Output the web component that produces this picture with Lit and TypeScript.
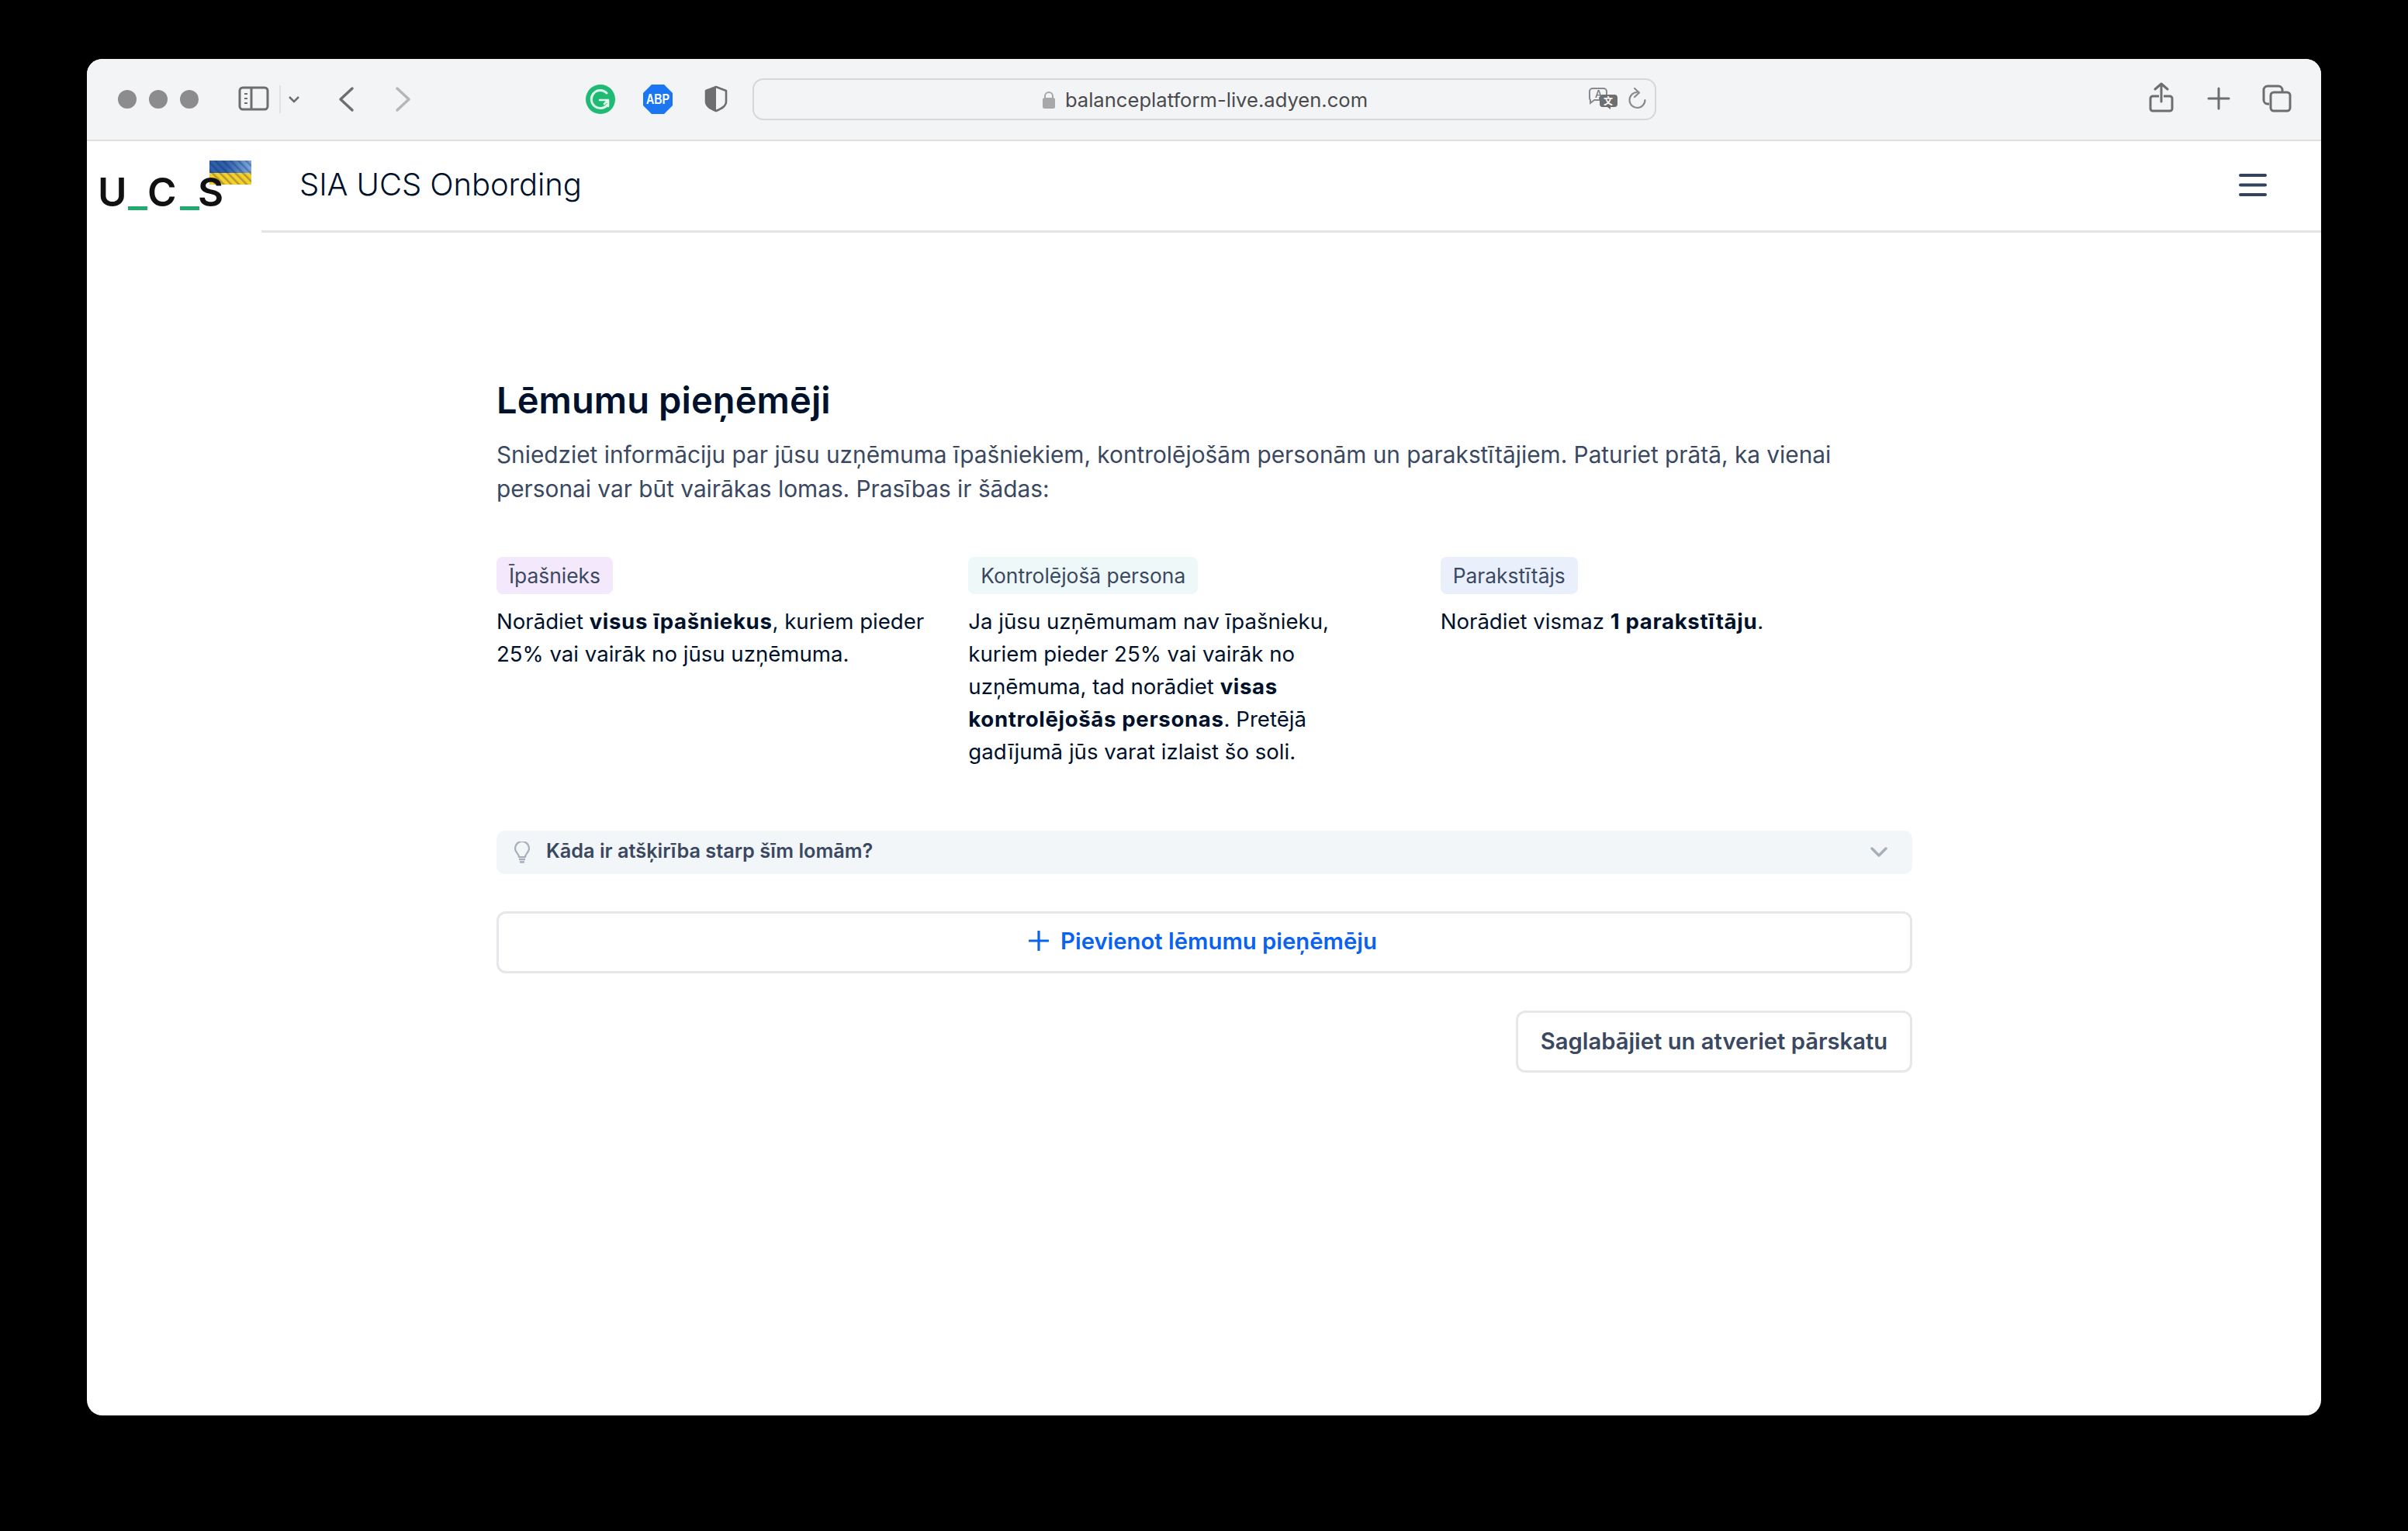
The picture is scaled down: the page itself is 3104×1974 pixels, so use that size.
import { LitElement, html, css, svg } from "lit";
import { customElement } from "lit/decorators.js";

@customElement("app-root")
export class AppRoot extends LitElement {
  static styles = css`
    :host { display: block; box-sizing: border-box; background: #000; padding: 76px 112px 149px; font-family: Inter, "Noto Sans", sans-serif; color: #00112c; height: 1974px; overflow: hidden; }
    .win { height: 100%; background: #fff; border-radius: 20px; overflow: hidden; display: flex; flex-direction: column; }
    .bar { height: 104px; flex: none; background: #f3f4f6; border-bottom: 2px solid #dfe0e2; position: relative; }
    .chrome { position: absolute; left: 0; top: 0; }
    .url { position: absolute; left: 858px; top: 25px; width: 1165px; height: 54px; box-sizing: border-box; border: 2px solid #d6d7da; border-radius: 14px; display: flex; align-items: center; justify-content: center; gap: 13px; font-size: 25.6px; color: #4a4a4d; padding-left: 2px; }
    .head { height: 118px; flex: none; display: flex; }
    .logo { width: 225px; flex: none; position: relative; }
    .logo svg { position: absolute; left: 0; top: 0; }
    .headmain { flex: 1; border-bottom: 3px solid #e3e4e6; display: flex; align-items: center; justify-content: space-between; padding: 0 70px 4px 49px; }
    .title { font-size: 40px; font-weight: 300; letter-spacing: -0.1px; color: #00112c; }
    .mark { font-size: 51px; font-weight: 600; color: #111; position: absolute; top: 35px; }
    .mu { left: 14px; } .mc { left: 78px; } .ms { left: 143px; }
    .content { padding: 186px 527px 0 528px; display: flex; flex-direction: column; }
    h1 { margin: 0; font-size: 47px; line-height: 60px; font-weight: 600; letter-spacing: 0.1px; color: #00112c; }
    .lead { margin: 18px 0 0; font-size: 29.8px; line-height: 44px; color: #3a4861; }
    .cols { display: grid; grid-template-columns: repeat(3, 1fr); margin-top: 66px; }
    .col { padding-right: 54px; }
    .pill { display: inline-block; height: 48px; line-height: 48px; padding: 0 16px; border-radius: 8px; font-size: 26.4px; color: #3a4861; }
    .p1 { background: #f3e8fc; } .p2 { background: #eef8f9; } .p3 { background: #e9f0fc; }
    .col p { margin: 14px 0 0; font-size: 27.6px; line-height: 42px; color: #00112c; }
    b { font-weight: 700; letter-spacing: 0.65px; }
    .acc { margin-top: 81px; height: 56px; background: #f3f6f9; border-radius: 10px; display: flex; align-items: center; padding: 0 32px 6px 23px; box-sizing: border-box; font-size: 25.3px; font-weight: 600; color: #3a4861; gap: 21px; }
    .acc svg { margin-bottom: -6px; }
    .acc span { flex: 1; }
    .add { margin-top: 48px; height: 80px; box-sizing: border-box; border: 3px solid #e6e7ea; border-radius: 12px; display: flex; align-items: center; justify-content: center; gap: 15px; padding: 0 4px 4px 0; font-size: 29.3px; font-weight: 600; color: #0a62f0; }
    .foot { display: flex; justify-content: flex-end; margin-top: 48px; }
    .save { height: 80px; width: 511px; box-sizing: border-box; border: 3px solid #e6e7ea; border-radius: 12px; display: flex; align-items: center; justify-content: center; padding-bottom: 2px; font-size: 29.2px; font-weight: 600; color: #3a4861; }
  `;

  private chrome() {
    const g = "#6e6e70";
    return svg`<svg class="chrome" width="2880" height="104" viewBox="0 0 2880 104" fill="none">
      <circle cx="52" cy="52" r="12" fill="#8c8c8e"/><circle cx="92" cy="52" r="12" fill="#8c8c8e"/><circle cx="132" cy="52" r="12" fill="#8c8c8e"/>
      <rect x="197" y="37" width="36" height="28" rx="4" stroke="${g}" stroke-width="3"/><path d="M212 37v28" stroke="${g}" stroke-width="3"/>
      <path d="M203 45h4M203 51h4M203 57h4" stroke="${g}" stroke-width="2"/>
      <path d="M249 34v36" stroke="#dcdcde" stroke-width="1.5"/>
      <path d="M261 49l6 6 6-6" stroke="${g}" stroke-width="2.5"/>
      <path d="M342 38l-15 14 15 14" stroke="${g}" stroke-width="3.5" stroke-linecap="round" stroke-linejoin="round"/>
      <path d="M400 38l15 14-15 14" stroke="#b6b6b8" stroke-width="3.5" stroke-linecap="round" stroke-linejoin="round"/>
      <circle cx="662" cy="52" r="19" fill="#1fbb74"/>
      <path d="M670 44a11.5 11.5 0 1 0 1 15" stroke="#e4f7ee" stroke-width="3" stroke-linecap="round"/>
      <path d="M661 53h11v8M672 53l-5 5" stroke="#e4f7ee" stroke-width="2.6" stroke-linecap="round" stroke-linejoin="round"/>
      <path d="M728 33h16l11 11v16l-11 11h-16l-11-11V44z" fill="#1a76f2"/>
      <text x="736" y="58" font-family="Liberation Sans" font-size="19" font-weight="700" fill="#fff" text-anchor="middle" textLength="30" lengthAdjust="spacingAndGlyphs">ABP</text>
      <path d="M798 41l13-5 13 5v14c0 6-6 9-13 12-7-3-13-6-13-12z" stroke="${g}" stroke-width="2.6" stroke-linejoin="round"/>
      <path d="M798 41l13-5v31c-7-3-13-6-13-12z" fill="${g}"/>
      <path d="M1941 38h14a4 4 0 0 1 4 4v8h-9v3h-7l-5 4v-4a4 4 0 0 1-1-3v-8a4 4 0 0 1 4-4z" stroke="#8a8a8c" stroke-width="2"/>
      <text x="1944" y="50" font-family="Inter" font-size="13" font-weight="500" fill="#77777a">A</text>
      <path d="M1954 46h15a4 4 0 0 1 4 4v8a4 4 0 0 1-4 4h-5v3l-4-3h-6a4 4 0 0 1-4-4v-8a4 4 0 0 1 4-4z" fill="#6e6e70"/>
      <text x="1961" y="59" font-family="Noto Sans CJK SC" font-size="12" font-weight="700" fill="#fff" text-anchor="middle">文</text>
      <path d="M1998 43A10 10 0 1 0 2008.5 53" stroke="#8a8a8c" stroke-width="2.2" stroke-linecap="round"/>
      <path d="M1995 38l6 5.5-6 5.5" stroke="#8a8a8c" stroke-width="2.2" stroke-linecap="round" stroke-linejoin="round"/>
      <path d="M2671 48h-8a3 3 0 0 0-3 3v13a3 3 0 0 0 3 3h22a3 3 0 0 0 3-3V51a3 3 0 0 0-3-3h-8" stroke="${g}" stroke-width="3"/>
      <path d="M2674 55V33m-8 6l8-7 8 7" stroke="${g}" stroke-width="3" stroke-linecap="round" stroke-linejoin="round"/>
      <path d="M2748 38v26M2735 51h26" stroke="${g}" stroke-width="3" stroke-linecap="round"/>
      <path d="M2813 58h-2a5 5 0 0 1-5-5V40a5 5 0 0 1 5-5h14a5 5 0 0 1 5 5v2" stroke="${g}" stroke-width="3"/>
      <rect x="2815" y="43" width="25" height="24" rx="4" stroke="${g}" stroke-width="3"/>
    </svg>`;
  }

  render() {
    return html`<div class="win">
      <div class="bar">
        ${this.chrome()}
        <div class="url">
          <svg width="16" height="23" viewBox="0 0 16 23" fill="none"><path d="M3 11V7a5 5 0 0 1 10 0v4" stroke="#a8a8aa" stroke-width="2"/><rect y="9" width="16" height="14" rx="2.5" fill="#a8a8aa"/></svg>
          <span>balanceplatform-live.adyen.com</span>
        </div>
      </div>
      <div class="head">
        <div class="logo">
          <svg width="225" height="118" viewBox="0 0 225 118" fill="none">
            <defs>
              <pattern id="st" width="7" height="7" patternUnits="userSpaceOnUse" patternTransform="rotate(-45)"><rect width="2.5" height="7" fill="#123" opacity=".3"/></pattern>
              <linearGradient id="bl" x1="0" x2="1" y1="0" y2="0"><stop offset="0.4" stop-color="#2d5fae"/><stop offset="1" stop-color="#7ea8e2"/></linearGradient>
            </defs>
            <rect x="158" y="25" width="54" height="16" fill="url(#bl)"/>
            <rect x="158" y="41" width="54" height="15" fill="#f5cf2b"/>
            <rect x="158" y="25" width="54" height="31" fill="url(#st)"/>
            <rect x="53" y="84" width="25" height="5" fill="#1faa6e"/>
            <rect x="120" y="84" width="25" height="5" fill="#1faa6e"/>
          </svg>
          <span class="mark mu">U</span>
          <span class="mark mc">C</span>
          <span class="mark ms">S</span>
        </div>
        <div class="headmain">
          <span class="title">SIA UCS Onbording</span>
          <svg width="36" height="30" viewBox="0 0 36 30" fill="none"><path d="M2 3h32M2 15.5h32M2 28h32" stroke="#33415c" stroke-width="4" stroke-linecap="round"/></svg>
        </div>
      </div>
      <div class="content">
        <h1>Lēmumu pieņēmēji</h1>
        <p class="lead">Sniedziet informāciju par jūsu uzņēmuma īpašniekiem, kontrolējošām personām un parakstītājiem. Paturiet prātā, ka vienai personai var būt vairākas lomas. Prasības ir šādas:</p>
        <div class="cols">
          <div class="col"><span class="pill p1">Īpašnieks</span><p>Norādiet <b>visus īpašniekus</b>, kuriem pieder 25% vai vairāk no jūsu uzņēmuma.</p></div>
          <div class="col"><span class="pill p2">Kontrolējošā persona</span><p>Ja jūsu uzņēmumam nav īpašnieku, kuriem pieder 25% vai vairāk no uzņēmuma, tad norādiet <b>visas kontrolējošās personas</b>. Pretējā gadījumā jūs varat izlaist šo soli.</p></div>
          <div class="col"><span class="pill p3">Parakstītājs</span><p>Norādiet vismaz <b>1 parakstītāju</b>.</p></div>
        </div>
        <div class="acc">
          <svg width="20" height="28" viewBox="0 0 20 28" fill="none"><path d="M6 20c0-4-5-6-5-11a9 9 0 0 1 18 0c0 5-5 7-5 11z" stroke="#a7afbb" stroke-width="2.2"/><path d="M6 23h8M7 26.5h6" stroke="#a7afbb" stroke-width="2.5"/></svg>
          <span>Kāda ir atšķirība starp šīm lomām?</span>
          <svg width="22" height="14" viewBox="0 0 22 14" fill="none"><path d="M2 2l9 9 9-9" stroke="#a7afbb" stroke-width="3.5" stroke-linecap="round" stroke-linejoin="round"/></svg>
        </div>
        <div class="add">
          <svg width="26" height="26" viewBox="0 0 26 26" fill="none"><path d="M13 1v24M1 13h24" stroke="#0a62f0" stroke-width="3.2" stroke-linecap="round"/></svg>
          <span>Pievienot lēmumu pieņēmēju</span>
        </div>
        <div class="foot"><div class="save">Saglabājiet un atveriet pārskatu</div></div>
      </div>
    </div>`;
  }
}
